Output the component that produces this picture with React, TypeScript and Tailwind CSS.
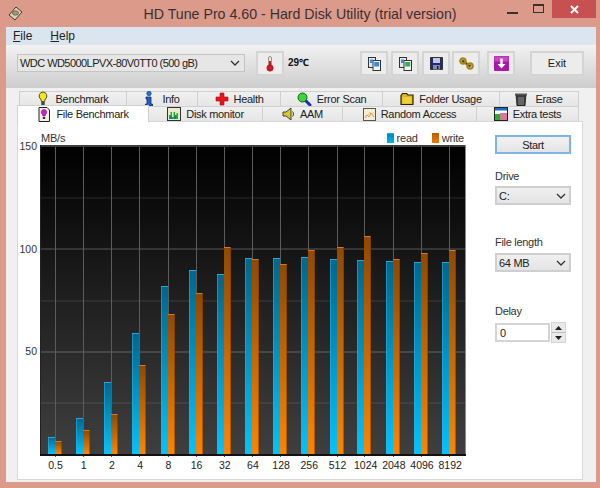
import type { ReactNode } from 'react'

const font = "font-['Liberation_Sans','Noto_Sans',sans-serif]"

const sizes = ['0.5', '1', '2', '4', '8', '16', '32', '64', '128', '256', '512', '1024', '2048', '4096', '8192']
const gridX = [55.5, 83.5, 111.5, 139.5, 168.5, 196.5, 224.5, 252.5, 280.5, 308.5, 337.5, 364.5, 393.5, 421.5, 449.5]
// top edge of each bar, in page pixels
const readTop = [437, 418, 382, 333, 286, 270, 274, 258, 258, 257, 259, 260, 261, 262, 262]
const writeTop = [441, 430, 414, 365, 314, 293, 247, 259, 264, 250, 247, 236, 259, 253, 250]

const Bulb = () => (
  <svg width="10" height="16" viewBox="0 0 10 16">
    <path d="M5 1a4 4 0 0 0-2.5 7c.6.6.8 1.4.8 2.5h3.4c0-1.100.2-1.900.8-2.500A4 4 0 0 0 5 1z" fill="#f2e32c" stroke="#55520f" />
    <rect x="3.300" y="11" width="3.400" height="3.500" fill="#444" />
  </svg>
)
const InfoIcon = () => (
  <svg width="10" height="16" viewBox="0 0 10 16">
    <circle cx="5" cy="2.500" r="2.200" fill="#2277e0" stroke="#0a2a66" strokeWidth=".6" />
    <path d="M2 6h5v7h1.500v2h-7v-2H3V8H2z" fill="#1f5fd0" stroke="#0a1a50" strokeWidth=".7" />
  </svg>
)
const Cross = () => (
  <svg width="14" height="14" viewBox="0 0 14 14">
    <path d="M5 1h4v4h4v4H9v4H5V9H1V5h4z" fill="#e8141c" stroke="#a01018" strokeWidth=".6" />
  </svg>
)
const Magnifier = () => (
  <svg width="15" height="15" viewBox="0 0 15 15">
    <path d="M8 8l5 5" stroke="#1c2fb0" strokeWidth="3" strokeLinecap="round" />
    <circle cx="5.500" cy="5.500" r="4.500" fill="#3fd43a" stroke="#14660f" />
  </svg>
)
const Folder = () => (
  <svg width="14" height="14" viewBox="0 0 14 14">
    <path d="M1 3.500L2.500 1.500h4L8 3h5v9.500H1z" fill="#dcb418" stroke="#2a2408" strokeWidth="1.200" />
    <rect x="2.500" y="5" width="9" height="6.500" fill="#f0ce3a" />
  </svg>
)
const Trash = () => (
  <svg width="12" height="15" viewBox="0 0 12 15">
    <path d="M1 3h10L10 14H2z" fill="#3a3a3a" stroke="#111" strokeWidth=".7" />
    <rect x="0" y="1.500" width="12" height="2" fill="#555" />
    <path d="M4 5v8M6 5v8M8 5v8" stroke="#aaa" strokeWidth=".8" />
  </svg>
)
const FileBulb = () => (
  <svg width="14" height="15" viewBox="0 0 14 15">
    <path d="M2 .5h8l2.500 2.500v11.500H2z" fill="#f4f0e6" stroke="#222" />
    <path d="M7 2.500a2.700 2.700 0 0 0-1.500 5l.3 1.500h2.400l.3-1.500A2.700 2.700 0 0 0 7 2.500z" fill="#cc22cc" stroke="#501050" strokeWidth=".5" />
    <rect x="5.800" y="10" width="2.400" height="2" fill="#333" />
  </svg>
)
const ChartIcon = () => (
  <svg width="14" height="14" viewBox="0 0 14 14">
    <rect x=".5" y=".5" width="13" height="13" fill="#ece8d0" stroke="#333" />
    <path d="M2 12V8h1.500v-3H5v5h1.500V5H8v3h1.500V6H11v6z" fill="#18b030" />
    <path d="M4 12V9M8 12V9" stroke="#1848d8" strokeWidth="1" />
  </svg>
)
const Speaker = () => (
  <svg width="13" height="14" viewBox="0 0 13 14">
    <path d="M1 5h3l5-4v12l-5-4H1z" fill="#d8c828" stroke="#333" strokeWidth=".9" />
    <path d="M10.500 4.500c1.300 1.500 1.300 3.500 0 5" fill="none" stroke="#333" />
  </svg>
)
const RandomIcon = () => (
  <svg width="13" height="13" viewBox="0 0 13 13">
    <rect x=".5" y=".5" width="12" height="12" fill="#f4efd6" stroke="#555" />
    <path d="M2 10l2-3 2 2 2-4 3 4" fill="none" stroke="#e89050" />
    <path d="M2 8l3-1 2-3 2 2 2-2" fill="none" stroke="#e8b860" strokeWidth=".7" />
  </svg>
)
const ExtraIcon = () => (
  <svg width="14" height="14" viewBox="0 0 14 14">
    <rect x=".5" y=".5" width="13" height="13" fill="#fff" stroke="#222" />
    <rect x="1" y="1" width="12" height="2.500" fill="#1c6cc8" />
    <rect x="1" y="7" width="5" height="6" fill="#22b030" />
    <rect x="6" y="6" width="7" height="7" fill="#d87898" />
  </svg>
)
const CopyIcon = ({ color }: { color: string }) => (
  <svg width="13" height="14" viewBox="0 0 13 14">
    <rect x=".5" y=".5" width="7" height="10" fill="#e8e8e8" stroke="#333" />
    <rect x="5" y="3.500" width="7.500" height="10" fill="#f4f4f4" stroke="#333" />
    <rect x="6.200" y="5" width="5" height="4.500" fill={color} />
    <rect x="2" y="2.500" width="3" height="3.500" fill="#3d8ad8" />
  </svg>
)
const Floppy = () => (
  <svg width="13" height="13" viewBox="0 0 13 13">
    <path d="M.5.500h12v12H.5z" fill="#1c2a80" stroke="#333" />
    <rect x="3" y="1" width="7" height="5" fill="#c8c8d8" />
    <rect x="3" y="8" width="7" height="4.500" fill="#8a8a98" />
    <rect x="7" y="9" width="1.500" height="3" fill="#222" />
  </svg>
)
const ChainIcon = () => (
  <svg width="15" height="13" viewBox="0 0 15 13">
    <path d="M3 3.500L11.500 9.500" stroke="#444" strokeWidth="2.500" />
    <circle cx="4" cy="4" r="2.700" fill="none" stroke="#a8880c" strokeWidth="2.200" />
    <circle cx="11" cy="9" r="2.700" fill="none" stroke="#a8880c" strokeWidth="2.200" />
  </svg>
)
const Thermo = () => (
  <svg width="8" height="16" viewBox="0 0 8 16">
    <rect x="2.500" y=".5" width="3" height="10" rx="1.500" fill="#e8e0e0" stroke="#664" strokeWidth=".6" />
    <rect x="3" y="5" width="2" height="6" fill="#d81820" />
    <circle cx="4" cy="12" r="3.200" fill="#d81820" stroke="#801018" strokeWidth=".5" />
  </svg>
)
const DownIcon = () => (
  <svg width="15" height="15" viewBox="0 0 15 15">
    <rect width="15" height="15" rx="1" fill="#a818a8" />
    <rect x=".5" y=".5" width="14" height="5" fill="#c848c0" />
    <path d="M6.300 2.500h2.400v5.500h2.800l-4 4.500-4-4.500h2.800z" fill="#fff" />
  </svg>
)
const DiskIcon = () => (
  <svg width="15" height="15" viewBox="0 0 15 15">
    <path d="M1 9l7-8 6 5-7 8z" fill="#d8d0b8" stroke="#4a3a28" />
    <ellipse cx="7.500" cy="7" rx="3" ry="2.200" fill="#a89878" stroke="#4a3a28" strokeWidth=".6" />
  </svg>
)

const Chevron = () => (
  <svg width="10" height="6" viewBox="0 0 10 6" className="shrink-0">
    <path d="M1 1l4 4 4-4" fill="none" stroke="#333" strokeWidth="1.300" />
  </svg>
)

function Tab({ w, icon, label, gap = 'gap-[5px]' }: { w: string; icon: ReactNode; label: string; gap?: string }) {
  return (
    <div className={`${w} h-full flex items-center justify-center ${gap} border border-b-0 border-[#d0d0d0] bg-gradient-to-b from-[#f0f0f0] to-[#e6e6e6] text-[11px] tracking-[-0.3px] text-[#222] -mr-px`}>
      {icon}
      <span>{label}</span>
    </div>
  )
}

function ToolButton({ className, children }: { className: string; children: ReactNode }) {
  return (
    <div className={`${className} w-[28px] h-[25px] shrink-0 flex items-center justify-center border-2 border-[#d4d4d4] bg-[#ececec]`}>
      {children}
    </div>
  )
}

function Combo({ className, label }: { className: string; label: string }) {
  return (
    <div className={`${className} w-[76px] flex items-center justify-between pl-[2px] pr-[3px] border-2 border-[#cfcfcf] bg-gradient-to-b from-[#f0f0f0] to-[#e4e4e4] text-[11px] text-[#222]`}>
      <span>{label}</span>
      <Chevron />
    </div>
  )
}

function Plot() {
  return (
    <svg width="426" height="313" viewBox="40 145 426 313" className="block">
      <defs>
        <linearGradient id="plotBg" x1="0" y1="0" x2="0" y2="1">
          <stop offset="0" stopColor="#000000" />
          <stop offset="1" stopColor="#3f3f3f" />
        </linearGradient>
        <linearGradient id="readFill" x1="0" y1="0" x2="0" y2="1">
          <stop offset="0" stopColor="#00668c" />
          <stop offset="1" stopColor="#00c4ff" />
        </linearGradient>
        <linearGradient id="writeFill" x1="0" y1="0" x2="0" y2="1">
          <stop offset="0" stopColor="#904800" />
          <stop offset="1" stopColor="#ff8400" />
        </linearGradient>
      </defs>
      <rect x="41" y="147" width="424" height="307" fill="url(#plotBg)" />
      {[197.500, 300.500, 402.500].map(y => (
        <rect key={y} x="41" y={y} width="424" height="1" fill="#fff" opacity=".13" />
      ))}
      {[248.500, 351.500].map(y => (
        <rect key={y} x="41" y={y} width="424" height="1" fill="#fff" opacity=".28" />
      ))}
      {gridX.map(x => (
        <rect key={x} x={x - 0.5} y="147" width="1" height="310" fill="#5c5c5c" />
      ))}
      {gridX.map((x, i) => (
        <g key={sizes[i]}>
          <rect x={x - 7.500} y={readTop[i]} width="7" height={454 - readTop[i]} fill="url(#readFill)" />
          <rect x={x - 7.500} y={readTop[i]} width="7" height="1" fill="#20a8d8" />
          <rect x={x - 7.500} y={readTop[i]} width="1" height={454 - readTop[i]} fill="#30b0e0" opacity=".55" />
          <rect x={x - 0.500} y={writeTop[i]} width="7" height={454 - writeTop[i]} fill="url(#writeFill)" />
          <rect x={x - 0.500} y={writeTop[i]} width="7" height="1" fill="#d87818" />
          <rect x={x + 5.500} y={writeTop[i]} width="1" height={454 - writeTop[i]} fill="#5a3000" opacity=".45" />
        </g>
      ))}
      <rect x="40" y="145" width="426" height="2" fill="#3c3c3c" />
      <rect x="40" y="145" width="1" height="311" fill="#222" />
      <rect x="465" y="145" width="1" height="311" fill="#8a8a8a" />
      <rect x="40" y="454" width="426" height="2" fill="#111" />
    </svg>
  )
}

export default function App() {
  return (
    <div className={`${font} w-[600px] h-[488px] bg-[#dc9a8b] flex flex-col overflow-hidden`}>
      <div className="h-[27px] shrink-0 grid grid-cols-[1fr_auto_1fr] items-center">
        <div className="pl-[8px] flex items-center"><DiskIcon /></div>
        <div className="text-[14.2px] text-[#3a3030] leading-none pt-[1px]">HD Tune Pro 4.60 - Hard Disk Utility (trial version)</div>
        <div className="self-start flex justify-end items-start pr-[4px]">
          <div className="w-[11px] h-[2px] bg-[#333] mt-[12px] mr-[15px]" />
          <div className="w-[11px] h-[9px] border border-t-2 border-[#333] mt-[4px] mr-[8px]" />
          <div className="w-[44px] h-[18px] bg-[#c75050] flex items-center justify-center text-white">
            <svg width="9" height="9" viewBox="0 0 9 9">
              <path d="M1 1l7 7M8 1l-7 7" stroke="#fff" strokeWidth="2" />
            </svg>
          </div>
        </div>
      </div>

      <div className="ml-[6px] mr-[4px] h-[455px] flex flex-col bg-[#f0f0f0]">
        <div className="h-[18px] shrink-0 flex items-center gap-[18px] pl-[7px] bg-[#dae5ef] text-[12px] text-[#222]">
          <span><span className="underline">F</span>ile</span>
          <span><span className="underline">H</span>elp</span>
        </div>

        <div className="h-[43px] shrink-0 flex items-start pt-[6px] bg-gradient-to-b from-[#f2f2f2] to-[#cdcdcd]">
          <div className="ml-[11px] mt-[3px] w-[228px] h-[18px] flex items-center justify-between pl-[2px] pr-[4px] border border-[#c4c4c4] bg-[#e6e6e6] text-[11px] tracking-[-0.55px] text-[#222]">
            <span>WDC WD5000LPVX-80V0TT0 (500 gB)</span>
            <Chevron />
          </div>
          <ToolButton className="ml-[11px]"><Thermo /></ToolButton>
          <div className="ml-[4px] mt-[7px] w-[22px] text-[10px] leading-none font-bold text-[#111] whitespace-nowrap">29℃</div>
          <ToolButton className="ml-[50px]"><CopyIcon color="#3d8ad8" /></ToolButton>
          <ToolButton className="ml-[3px]"><CopyIcon color="#30b050" /></ToolButton>
          <ToolButton className="ml-[3px]"><Floppy /></ToolButton>
          <ToolButton className="ml-[2px]"><ChainIcon /></ToolButton>
          <ToolButton className="ml-[7px]"><DownIcon /></ToolButton>
          <div className="ml-[15px] w-[54px] h-[25px] flex items-center justify-center border-2 border-[#d4d4d4] bg-[#ececec] text-[11px] text-[#222]">Exit</div>
        </div>

        <div className="flex-1 pt-[3px] pl-[11px] flex flex-col">
          <div className="h-[15px] ml-[2px] flex shrink-0">
            <Tab w="w-[108px]" icon={<Bulb />} label="Benchmark" gap="gap-[8px]" />
            <Tab w="w-[72px]" icon={<InfoIcon />} label="Info" gap="gap-[8px]" />
            <Tab w="w-[84px]" icon={<Cross />} label="Health" />
            <Tab w="w-[103px]" icon={<Magnifier />} label="Error Scan" />
            <Tab w="w-[118px]" icon={<Folder />} label="Folder Usage" />
            <Tab w="w-[80px]" icon={<Trash />} label="Erase" gap="gap-[8px]" />
          </div>
          <div className="h-[15px] flex shrink-0 relative z-10">
            <div className="w-[132px] h-[17px] -mt-px flex items-center justify-center gap-[5px] border border-b-0 border-[#d0d0d0] bg-white text-[11px] tracking-[-0.3px] text-[#222] -mr-px">
              <FileBulb />
              <span>File Benchmark</span>
            </div>
            <Tab w="w-[115px]" icon={<ChartIcon />} label="Disk monitor" />
            <Tab w="w-[81px]" icon={<Speaker />} label="AAM" />
            <Tab w="w-[135px]" icon={<RandomIcon />} label="Random Access" />
            <Tab w="w-[103px]" icon={<ExtraIcon />} label="Extra tests" />
          </div>

          <div className="w-[566px] h-[359px] border border-[#d8d8d8] bg-white flex text-[#333]">
            <div className="w-[22px] pt-[18px] pr-[3px] text-right text-[10.5px] leading-[12px]">
              <div className="h-[102.5px]">150</div>
              <div className="h-[102.5px]">100</div>
              <div>50</div>
            </div>
            <div className="w-[426px] flex flex-col">
              <div className="h-[23px] flex items-end justify-between pb-[0px] pl-[1px] pr-[2px] text-[11px] tracking-[-0.2px] leading-[14px]">
                <span>MB/s</span>
                <div className="flex items-center">
                  <span className="w-[7px] h-[10px] bg-gradient-to-b from-[#0088b8] to-[#00b8f0] border-t border-[#20a8d8] mr-[3px]" />
                  <span>read</span>
                  <span className="w-[7px] h-[10px] bg-gradient-to-b from-[#b85c00] to-[#f07c00] ml-[14px] mr-[3px]" />
                  <span>write</span>
                </div>
              </div>
              <Plot />
              <div className="flex pl-[1.500px] text-[10.500px] leading-[14px] text-[#222]">
                {sizes.map(s => (
                  <div key={s} className="w-[28.200px] shrink-0 text-center">{s}</div>
                ))}
              </div>
            </div>
            <div className="ml-[29px] w-[77px] flex flex-col text-[11px] tracking-[-0.3px] leading-[14px] text-[#333]">
              <div className="mt-[13px] w-[76px] h-[19px] flex items-center justify-center border-2 border-[#7db4e8] bg-gradient-to-b from-[#f2f2f2] to-[#e4e4e4] text-[#222]">Start</div>
              <div className="mt-[15px]">Drive</div>
              <Combo className="mt-[3px] h-[19px]" label="C:" />
              <div className="mt-[30px]">File length</div>
              <Combo className="mt-[4px] h-[19px]" label="64 MB" />
              <div className="mt-[32px]">Delay</div>
              <div className="mt-[4px] flex items-center">
                <div className="w-[55px] h-[19px] flex items-center pl-[3px] border-2 border-[#d4d4d4] bg-white text-[#222]">0</div>
                <div className="ml-[1px] w-[15px] h-[21px] flex flex-col border border-[#d4d4d4] bg-[#eaeaea]">
                  <div className="flex-1 flex items-center justify-center border-b border-[#bbb]">
                    <svg width="7" height="4" viewBox="0 0 7 4"><path d="M3.500 0L7 4H0z" fill="#222" /></svg>
                  </div>
                  <div className="flex-1 flex items-center justify-center">
                    <svg width="7" height="4" viewBox="0 0 7 4"><path d="M0 0h7L3.500 4z" fill="#222" /></svg>
                  </div>
                </div>
              </div>
            </div>
          </div>
        </div>
      </div>
    </div>
  )
}
